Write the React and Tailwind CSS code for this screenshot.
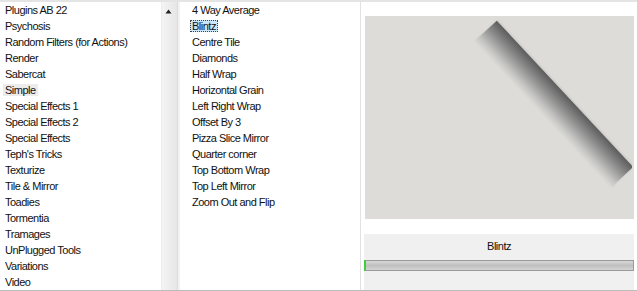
import React from "react";

const groups = [
  "Plugins AB 22",
  "Psychosis",
  "Random Filters (for Actions)",
  "Render",
  "Sabercat",
  "Simple",
  "Special Effects 1",
  "Special Effects 2",
  "Special Effects",
  "Teph's Tricks",
  "Texturize",
  "Tile & Mirror",
  "Toadies",
  "Tormentia",
  "Tramages",
  "UnPlugged Tools",
  "Variations",
  "Video",
];

const filters = [
  "4 Way Average",
  "Blintz",
  "Centre Tile",
  "Diamonds",
  "Half Wrap",
  "Horizontal Grain",
  "Left Right Wrap",
  "Offset By 3",
  "Pizza Slice Mirror",
  "Quarter corner",
  "Top Bottom Wrap",
  "Top Left Mirror",
  "Zoom Out and Flip",
];

export default function App() {
  return (
    <div
      className="w-[637px] h-[291px] flex flex-col bg-white overflow-hidden text-[11px] leading-[16px] text-[#111] tracking-[-0.5px]"
      style={{ fontFamily: '"Liberation Sans", Arial, sans-serif' }}
    >
      <div className="flex flex-1 border-t-2 border-[#e4e4e4]">
        {/* group list */}
        <div className="w-[161px] bg-white">
          {groups.map((g) => (
            <div key={g} className="h-[16px] pl-[3px]">
              <span className={"px-[2px] " + (g === "Simple" ? "bg-[#ececec]" : "")}>
                {g}
              </span>
            </div>
          ))}
        </div>
        {/* scrollbar */}
        <div className="w-[16px] bg-gradient-to-r from-[#f4f4f4] to-[#e6e6e6] border-l border-[#ececec] relative">
          <svg className="absolute left-[3px] top-[7px]" width="7" height="5" viewBox="0 0 7 5">
            <path d="M3.5 0.5 L6.5 4.5 L0.5 4.5 Z" fill="#222" />
          </svg>
        </div>
        <div className="w-[3px] bg-[#f2f2f2] border-l border-[#dcdcdc]" />
        {/* filter list */}
        <div className="w-[180px] bg-white pl-[10px]">
          {filters.map((f) => (
            <div key={f} className="h-[16px]">
              <span
                className={
                  "px-[2px] " +
                  (f === "Blintz"
                    ? "bg-[#cde6f7] outline outline-1 outline-dotted outline-[#444] -outline-offset-1"
                    : "")
                }
              >
                {f}
              </span>
            </div>
          ))}
        </div>
        {/* preview */}
        <div className="flex-1 flex flex-col border-l border-[#e2e2e2] pl-[4px] pr-[3px]">
          <div className="h-[14px] bg-white" />
          <div className="h-[203px] bg-[#dddcd8] relative overflow-hidden">
            <svg className="absolute inset-0" width="267" height="203" viewBox="0 0 267 203">
              <defs>
                <linearGradient id="bar" x1="0" y1="1" x2="0" y2="0">
                  <stop offset="0" stopColor="#dad9d5" />
                  <stop offset="0.2" stopColor="#c4c4c2" />
                  <stop offset="0.6" stopColor="#8e8e8e" />
                  <stop offset="1" stopColor="#5c5c5c" />
                </linearGradient>
                <filter id="sh" x="-20%" y="-40%" width="140%" height="180%">
                  <feGaussianBlur stdDeviation="1.2" />
                </filter>
              </defs>
              <g transform="translate(189 88) rotate(47)">
                <rect x="-100" y="-16" width="200" height="30" fill="#b8b8b4" filter="url(#sh)" opacity="0.6" />
                <rect x="-100" y="-15" width="200" height="30" fill="url(#bar)" />
              </g>
            </svg>
          </div>
          <div className="h-[15px] bg-white" />
          <div className="flex-1 bg-[#f0f0f0] flex flex-col items-center -ml-[1px]">
            <div className="h-[24px] flex items-center">Blintz</div>
            <div className="mt-[2px] w-full h-[11px] border border-[#9a9a9a] bg-gradient-to-b from-[#d8d8d8] via-[#c0c0c0] to-[#d4d4d4] border-l-2 border-l-[#3ccf3c]" />
          </div>
        </div>
      </div>
      <div className="h-[3px] bg-gradient-to-b from-[#d0d0d0] to-[#a8a8a8]" />
    </div>
  );
}
